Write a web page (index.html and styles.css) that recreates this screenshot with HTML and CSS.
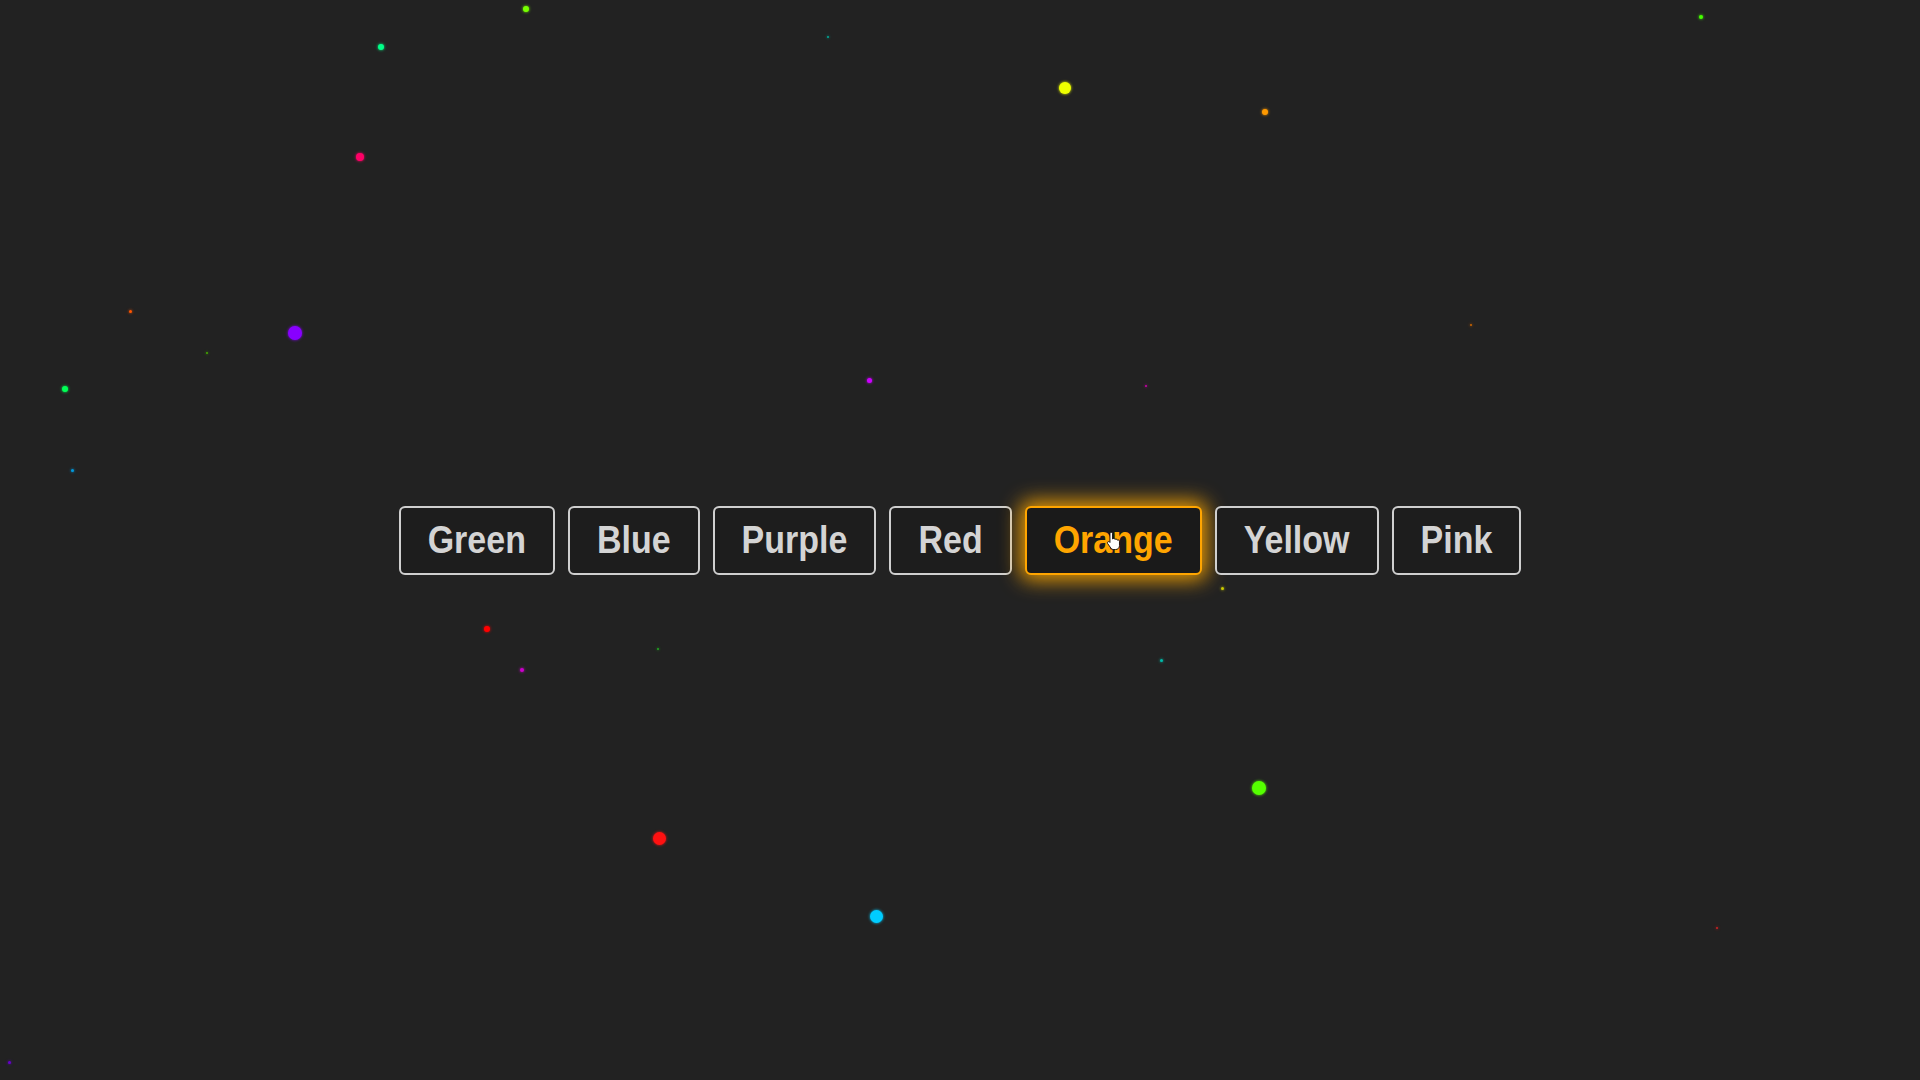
FILE: index.html
```html
<!DOCTYPE html>
<html lang="en">
<head>
<meta charset="utf-8">
<title>Color Buttons</title>
<link rel="stylesheet" href="styles.css">
</head>
<body>
<div class="particles">
  <span class="dot" style="--x:526px;--y:9px;--s:6px;--c:#77ff00"></span>
  <span class="dot" style="--x:381px;--y:47px;--s:6px;--c:#00ff88"></span>
  <span class="dot" style="--x:828px;--y:37px;--s:2px;--c:#00aa99"></span>
  <span class="dot" style="--x:1065px;--y:88px;--s:12px;--c:#eeff00"></span>
  <span class="dot" style="--x:1265px;--y:112px;--s:6px;--c:#ff9900"></span>
  <span class="dot" style="--x:1701px;--y:17px;--s:4px;--c:#44ff00"></span>
  <span class="dot" style="--x:360px;--y:157px;--s:8px;--c:#ff0066"></span>
  <span class="dot" style="--x:130px;--y:311px;--s:3px;--c:#ff5500"></span>
  <span class="dot" style="--x:295px;--y:333px;--s:14px;--c:#8800ff"></span>
  <span class="dot" style="--x:207px;--y:353px;--s:2px;--c:#44aa00"></span>
  <span class="dot" style="--x:65px;--y:389px;--s:6px;--c:#00ff55"></span>
  <span class="dot" style="--x:869px;--y:380px;--s:5px;--c:#cc00ff"></span>
  <span class="dot" style="--x:1146px;--y:386px;--s:2px;--c:#cc00aa"></span>
  <span class="dot" style="--x:1471px;--y:325px;--s:2px;--c:#cc6600"></span>
  <span class="dot" style="--x:72px;--y:470px;--s:3px;--c:#0099dd"></span>
  <span class="dot" style="--x:487px;--y:629px;--s:6px;--c:#ff0000"></span>
  <span class="dot" style="--x:522px;--y:670px;--s:4px;--c:#cc00cc"></span>
  <span class="dot" style="--x:658px;--y:649px;--s:2px;--c:#22aa22"></span>
  <span class="dot" style="--x:1161px;--y:660px;--s:3px;--c:#00bbaa"></span>
  <span class="dot" style="--x:1222px;--y:588px;--s:3px;--c:#cccc00"></span>
  <span class="dot" style="--x:1259px;--y:788px;--s:14px;--c:#55ff00"></span>
  <span class="dot" style="--x:659px;--y:838px;--s:13px;--c:#ff1111"></span>
  <span class="dot" style="--x:876px;--y:916px;--s:13px;--c:#00ccff"></span>
  <span class="dot" style="--x:1717px;--y:928px;--s:2px;--c:#cc2222"></span>
  <span class="dot" style="--x:9px;--y:1062px;--s:3px;--c:#6600cc"></span>
</div>

<main class="stage">
  <div class="button-row">
    <button class="color-btn"><span class="label">Green</span></button>
    <button class="color-btn"><span class="label">Blue</span></button>
    <button class="color-btn"><span class="label">Purple</span></button>
    <button class="color-btn"><span class="label">Red</span></button>
    <button class="color-btn active"><span class="label">Orange</span></button>
    <button class="color-btn"><span class="label">Yellow</span></button>
    <button class="color-btn"><span class="label">Pink</span></button>
  </div>
</main>

<svg class="cursor" width="14" height="19" viewBox="0 0 16 22" aria-hidden="true">
  <path d="M6 1.5c.8 0 1.5.7 1.5 1.5v6.2c.3-.4.8-.6 1.3-.6.8 0 1.4.5 1.5 1.2.3-.3.7-.5 1.2-.5.8 0 1.4.6 1.5 1.3.3-.2.6-.3 1-.3.9 0 1.5.7 1.5 1.5V17c0 2.5-2 4.5-4.5 4.5H9c-1.5 0-2.8-.7-3.6-1.9L1.8 14.5c-.5-.7-.3-1.6.4-2 .6-.4 1.4-.3 1.9.2L4.5 13.2V3c0-.8.7-1.5 1.5-1.5z" fill="#ffffff" stroke="#000000" stroke-width="1"/>
</svg>
</body>
</html>
```

FILE: styles.css
```css
html, body {
  margin: 0;
  padding: 0;
  height: 100%;
}

body {
  background: #222222;
  font-family: "Liberation Sans", Arial, sans-serif;
  overflow: hidden;
  position: relative;
}

.particles {
  position: absolute;
  inset: 0;
  pointer-events: none;
}

.dot {
  position: absolute;
  left: var(--x);
  top: var(--y);
  width: var(--s);
  height: var(--s);
  margin-left: calc(var(--s) / -2);
  margin-top: calc(var(--s) / -2);
  border-radius: 50%;
  background: var(--c);
  box-shadow: 0 0 3px var(--c);
}

.stage {
  height: 100vh;
  display: flex;
  align-items: center;
  justify-content: center;
  position: relative;
}

.button-row {
  display: flex;
  gap: 13px;
}

.color-btn {
  font-family: "Liberation Sans", Arial, sans-serif;
  font-weight: bold;
  font-size: 34px;
  line-height: 37px;
  padding: 14px 27px;
  color: #d4d4d4;
  background: #1d1d1d;
  border: 2px solid #cfcfcf;
  border-radius: 6px;
  cursor: pointer;
}

.label {
  display: inline-block;
  transform: scaleY(1.12);
}

.color-btn.active {
  color: #ffa500;
  border-color: #ffa500;
  background: #1a1a1a;
  box-shadow: 0 0 20px 5px rgba(255, 168, 0, 0.9);
}

.cursor {
  position: absolute;
  left: 1106px;
  top: 531px;
}
```
